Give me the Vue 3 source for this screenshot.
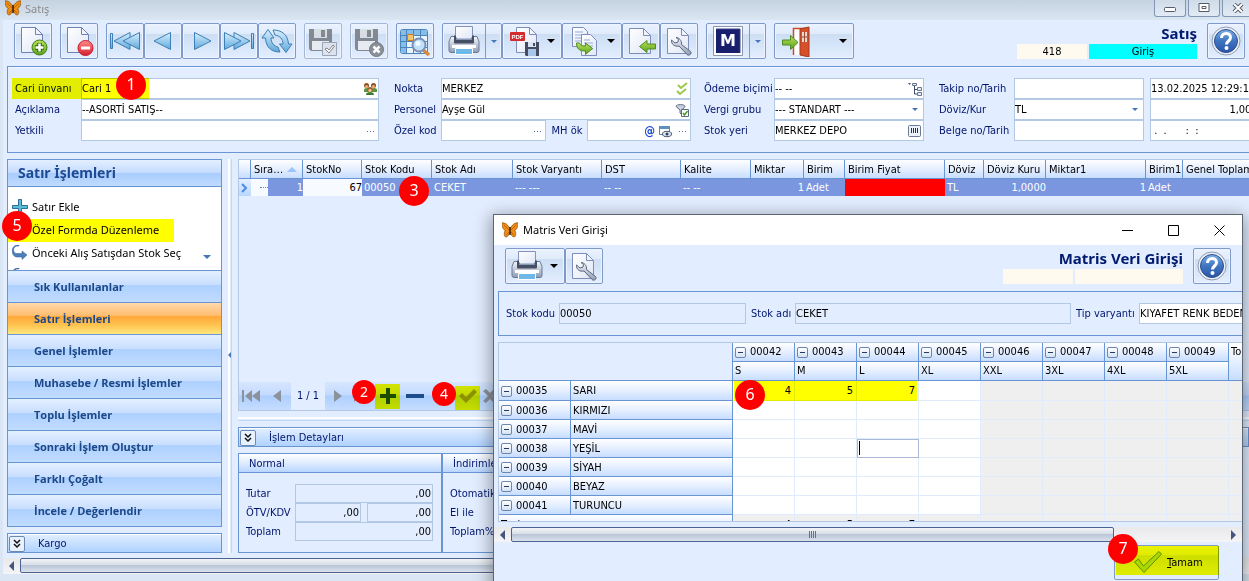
<script setup>
import { ref } from 'vue'

const toolbar = [
  [{ i: 'add', t: 'Yeni' }],
  [{ i: 'del', t: 'Sil' }],
  [{ i: 'first', t: 'İlk' }, { i: 'prev', t: 'Önceki' }, { i: 'next', t: 'Sonraki' }, { i: 'last', t: 'Son' }, { i: 'refresh', t: 'Yenile' }],
  [{ i: 'save', t: 'Kaydet', off: true }],
  [{ i: 'cancel', t: 'Vazgeç', off: true }],
  [{ i: 'find', t: 'Ara' }],
  [
    { i: 'print', t: 'Yazdır', split: true },
    { i: 'pdf', t: 'PDF', drop: true, tag: 'PDF' },
    { i: 'copy', t: 'Kopyala', drop: true },
    { i: 'import', t: 'Aktar' },
    { i: 'tools', t: 'Ayarlar' }
  ],
  [{ i: 'm', t: 'M', split: true, tag: 'M' }],
  [{ i: 'exit', t: 'Çıkış', drop: true, wide: true }]
]

const groups = [
  {
    c: 'g1',
    rows: [
      [{ id: 'cari', l: 'Cari ünvanı', v: 'Cari 1', icons: ['people'], hot: true }],
      [{ id: 'acik', l: 'Açıklama', v: '--ASORTİ SATIŞ--' }],
      [{ id: 'yet', l: 'Yetkili', v: '', icons: ['dots'] }]
    ]
  },
  {
    c: 'g2',
    rows: [
      [{ id: 'nokta', l: 'Nokta', v: 'MERKEZ', icons: ['checks'] }],
      [{ id: 'pers', l: 'Personel', v: 'Ayşe Gül', icons: ['filter'] }],
      [
        { id: 'ozel', l: 'Özel kod', v: '', icons: ['dots'] },
        { id: 'mh', l: 'MH ök', v: '', icons: ['at', 'view', 'dots'], second: true }
      ]
    ]
  },
  {
    c: 'g3',
    rows: [
      [{ id: 'odeme', l: 'Ödeme biçimi', v: '-- --', icons: ['tree'] }],
      [{ id: 'vergi', l: 'Vergi grubu', v: '--- STANDART ---', select: true }],
      [{ id: 'yer', l: 'Stok yeri', v: 'MERKEZ DEPO', icons: ['barcode'] }]
    ]
  },
  {
    c: 'g4',
    rows: [
      [{ id: 'takip', l: 'Takip no/Tarih', v: '' }],
      [{ id: 'doviz', l: 'Döviz/Kur', v: 'TL', select: true }],
      [{ id: 'belge', l: 'Belge no/Tarih', v: '' }]
    ]
  },
  {
    c: 'g5',
    rows: [
      [{ id: 'tarih', a: 'Takip tarihi', v: '13.02.2025 12:29:14' }],
      [{ id: 'kur', a: 'Kur', v: '1,0000', right: true }],
      [{ id: 'btarih', a: 'Belge tarihi', v: ' .  .      :  :' }]
    ]
  }
]

const nav = ['Sık Kullanılanlar', 'Satır İşlemleri', 'Genel İşlemler', 'Muhasebe / Resmi İşlemler', 'Toplu İşlemler', 'Sonraki İşlem Oluştur', 'Farklı Çoğalt', 'İncele / Değerlendir']
const active = ref(1)

const cols = [
  { h: 'Sıra…', w: 52, v: '1', r: true, sort: true },
  { h: 'StokNo', w: 59, v: '67', r: true, k: 'plain' },
  { h: 'Stok Kodu', w: 70, v: '00050', badge: 3 },
  { h: 'Stok Adı', w: 81, v: 'CEKET' },
  { h: 'Stok Varyantı', w: 89, v: '--- ---' },
  { h: 'DST', w: 79, v: '-- --' },
  { h: 'Kalite', w: 70, v: '-- --' },
  { h: 'Miktar', w: 53, v: '1', r: true },
  { h: 'Birim', w: 41, v: 'Adet' },
  { h: 'Birim Fiyat', w: 100, v: '', k: 'red' },
  { h: 'Döviz', w: 39, v: 'TL' },
  { h: 'Döviz Kuru', w: 62, v: '1,0000', r: true },
  { h: 'Miktar1', w: 100, v: '1', r: true },
  { h: 'Birim1', w: 37, v: 'Adet' },
  { h: 'Genel Toplam', w: 90, v: '' }
]

const sizes = [['00042', 'S'], ['00043', 'M'], ['00044', 'L'], ['00045', 'XL'], ['00046', 'XXL'], ['00047', '3XL'], ['00048', '4XL'], ['00049', '5XL']]
const colors = [['00035', 'SARI'], ['00036', 'KIRMIZI'], ['00037', 'MAVİ'], ['00038', 'YEŞİL'], ['00039', 'SİYAH'], ['00040', 'BEYAZ'], ['00041', 'TURUNCU']]
const amounts = ['4', '5', '7']
</script>

<template>
  <div class="app">
    <svg class="defs" aria-hidden="true">
      <defs>
        <linearGradient id="blue" x1="0" y1="0" x2="0" y2="1"><stop offset="0" stop-color="#d8efff" /><stop offset="1" stop-color="#5fa8dc" /></linearGradient>
        <linearGradient id="page" x1="0" y1="0" x2="1" y2="1"><stop offset="0" stop-color="#fff" /><stop offset="1" stop-color="#dfe6f5" /></linearGradient>
        <linearGradient id="green" x1="0" y1="0" x2="0" y2="1"><stop offset="0" stop-color="#b9e05a" /><stop offset="1" stop-color="#5aa21c" /></linearGradient>
        <linearGradient id="rose" x1="0" y1="0" x2="0" y2="1"><stop offset="0" stop-color="#ff8a8a" /><stop offset="1" stop-color="#d3202c" /></linearGradient>
        <linearGradient id="steel" x1="0" y1="0" x2="0" y2="1"><stop offset="0" stop-color="#f4f6fa" /><stop offset="1" stop-color="#8e9bb4" /></linearGradient>
        <linearGradient id="ball" x1="0" y1="0" x2="0" y2="1"><stop offset="0" stop-color="#7fb0e6" /><stop offset=".5" stop-color="#3f74c0" /><stop offset="1" stop-color="#2a55a8" /></linearGradient>
      </defs>
      <symbol id="i-add" viewBox="0 0 32 32"><path d="M4.500 2.500h14l7 7v18h-21z" fill="url(#page)" stroke="#6f82b8" /><path d="M18.500 2.500v7h7z" fill="#eef3fc" stroke="#6f82b8" /><circle cx="22.500" cy="22.500" r="7.500" fill="url(#green)" stroke="#3f7d16" /><path d="M22.500 18v9M18 22.500h9" stroke="#2f6b10" stroke-width="4.500" /><path d="M22.500 18.500v8M18.500 22.500h8" stroke="#fff" stroke-width="2.500" /></symbol>
      <symbol id="i-del" viewBox="0 0 32 32"><path d="M4.500 2.500h14l7 7v18h-21z" fill="url(#page)" stroke="#6f82b8" /><path d="M18.500 2.500v7h7z" fill="#eef3fc" stroke="#6f82b8" /><circle cx="22.500" cy="23" r="7.500" fill="url(#rose)" stroke="#c41c28" /><path d="M18 23h9" stroke="#fff" stroke-width="3" /></symbol>
      <symbol id="i-first" viewBox="0 0 32 32"><g fill="url(#blue)" stroke="#3d7fb4"><path d="M1.500 8.500h2v15h-2z" /><path d="M21 7.500 5 16l16 8.500v-6L16 16l5-2.500z" /><path d="M30.500 7.500 14 16l16.500 8.500z" /></g></symbol>
      <symbol id="i-prev" viewBox="0 0 32 32"><path d="M23.500 7.500 7 16l16.500 8.500z" fill="url(#blue)" stroke="#3d7fb4" /></symbol>
      <symbol id="i-next" viewBox="0 0 32 32"><path d="M9.500 7.500 26 16 9.500 24.500z" fill="url(#blue)" stroke="#3d7fb4" /></symbol>
      <symbol id="i-last" viewBox="0 0 32 32"><g fill="url(#blue)" stroke="#3d7fb4"><path d="M28.500 8.500h2v15h-2z" /><path d="M11 7.500 27 16l-16 8.500v-6L16 16l-5-2.500z" /><path d="M1.500 7.500 18 16 1.500 24.500z" /></g></symbol>
      <symbol id="i-refresh" viewBox="0 0 32 32"><g fill="url(#blue)" stroke="#3d7fb4"><path d="M7 4.500 13 13H10c0 5 3 8 7 9l2 5C10 27 5 22 4.500 13H1z" /><path d="M25 27.500 18.500 19H22c0-5-3-8-8-9l-2-5c9 0 15 5 15.500 14H31z" /></g></symbol>
      <symbol id="i-save" viewBox="0 0 32 32"><path d="M2 4h23v22H4l-2-2z" fill="#747980" /><path d="M7 4h13v9H7z" fill="#d8dce2" /><path d="M14 5h4v7h-4z" fill="#747980" /><path d="M5 16h17v9H5z" fill="#e9ecf0" /><path d="M15.500 17.500h14v13h-14z" fill="#dce2ec" stroke="#8e98a8" /><path d="m18 24 2-1 2 2 4-5 1.500 1-5.500 7z" fill="#fff" stroke="#777" /></symbol>
      <symbol id="i-cancel" viewBox="0 0 32 32"><path d="M2 4h23v22H4l-2-2z" fill="#747980" /><path d="M7 4h13v9H7z" fill="#d8dce2" /><path d="M14 5h4v7h-4z" fill="#747980" /><path d="M5 16h17v9H5z" fill="#e9ecf0" /><circle cx="23.500" cy="24.500" r="7" fill="#7d8288" stroke="#5f646a" /><path d="m20.500 21.500 6 6m0-6-6 6" stroke="#fff" stroke-width="2.500" /></symbol>
      <symbol id="i-find" viewBox="0 0 32 32"><rect x="1.500" y="4.500" width="27" height="24" rx="2" fill="#eaf4fd" stroke="#4b84ba" /><path d="M2 5h26v5H2zM2 10h5v18H2z" fill="#86bde8" /><path d="M7.500 5v23M14.500 5v23M21.500 5v23M2 10.500h26M2 16.500h26M2 22.500h26" stroke="#4b84ba" /><path d="M8.500 9.500h6v6h-6z" fill="#f6c26c" stroke="#cc7b20" /><path d="m23 24 7 6" stroke="#d28b38" stroke-width="3.500" /><circle cx="20" cy="20" r="6.500" fill="#bfe0f8" stroke="#7a8fb8" stroke-width="2" /><circle cx="19" cy="18.500" r="2.500" fill="#f2faff" /></symbol>
      <symbol id="i-print" viewBox="0 0 32 32"><path d="M7.500 1.500h17V14h-17z" fill="url(#page)" stroke="#8292ba" /><path d="M3 11.500h4.500L9 15h14l1.500-3.500H29l2 5v9q0 2-2 2H3q-2 0-2-2v-9z" fill="url(#steel)" stroke="#6a7894" /><path d="M6 10.500h2V15h16v-4.500h2v7q0 1-1 1H7q-1 0-1-1z" fill="#454e63" /><path d="M4 20h24v3H4z" fill="#fff" /><path d="M7.500 23.500h17v6h-17z" fill="#6fb8ea" stroke="#fff" /></symbol>
      <symbol id="i-pdf" viewBox="0 0 32 32"><path d="M8.500 2.500h13l7 7v18h-20z" fill="url(#page)" stroke="#7f8dbb" /><path d="M21.500 2.500v7h7z" fill="#eef3fc" stroke="#7f8dbb" /><rect x="2" y="7" width="15" height="9" rx="1" fill="#d42c2c" /><path d="M17 17h14v14H18l-1-1z" fill="#434c60" /><path d="M20 17h8v5h-8z" fill="#dbe6f5" /><path d="M25 18h2v3h-2z" fill="#434c60" /><path d="M20 24h8v7h-8z" fill="#a9c5e8" /></symbol>
      <symbol id="i-copy" viewBox="0 0 32 32"><path d="M4.500 2.500h11l4 4v15h-15z" fill="url(#page)" stroke="#7f8dbb" /><path d="M7 7h8M7 10h9M7 13h9M7 16h9" stroke="#93abd6" /><path d="M13.500 9.500h9l6 6v15h-15z" fill="url(#page)" stroke="#7f8dbb" /><path d="M16 15h6M16 18h9M16 21h9M16 24h9" stroke="#93abd6" /><path d="M8.500 18c0 6 3 8 9 8v3.500l7-6-7-5.500v3c-4 0-5-1-6-3z" fill="url(#green)" stroke="#4e8c22" /></symbol>
      <symbol id="i-import" viewBox="0 0 32 32"><path d="M4.500 3.500h14l7 7v18h-21z" fill="url(#page)" stroke="#7f8dbb" /><path d="M18.500 3.500v7h7z" fill="#eef3fc" stroke="#7f8dbb" /><path d="M14.500 21.500 22 15.500v3.500h8.500v5H22v3.500z" fill="url(#green)" stroke="#4e8c22" /></symbol>
      <symbol id="i-tools" viewBox="0 0 32 32"><path d="M4.500 3.500h14l7 7v18h-21z" fill="url(#page)" stroke="#7f8dbb" /><path d="M18.500 3.500v7h7z" fill="#eef3fc" stroke="#7f8dbb" /><path d="M13 12.500c3 0 6 3 5.500 7l9 7c2 2-1.500 5-3.500 3l-8-8.500c-4 1-8-1.500-7.500-6l3.500 3 3-1 .500-2.500z" fill="url(#steel)" stroke="#59667e" /></symbol>
      <symbol id="i-m" viewBox="0 0 32 32"><path d="M1.500 1.500h29v29h-29z" fill="#fff" stroke="#8b95ac" /><path d="M4 4h24v24H4z" fill="#18206d" /><path d="M4 4h24v24" fill="none" stroke="#3a4390" /></symbol>
      <symbol id="i-exit" viewBox="0 0 32 32"><path d="M13.500 30V3.500h12V30" fill="#fff" stroke="#cf4a26" stroke-width="1.500" /><path d="m20 4 9-2v30l-9-2z" fill="#d6502a" stroke="#a43a1c" /><path d="M22 7h5v10h-5z" fill="#ead8cc" /><path d="M24.500 7v10M22 12h5" stroke="#9a4a30" /><path d="M2.500 15h8v-4.500L18 17.500l-7.500 7V20h-8z" fill="url(#green)" stroke="#4e8c22" /></symbol>
      <symbol id="i-help" viewBox="0 0 32 32"><circle cx="16" cy="16" r="14" fill="#eef2f8" stroke="#8d99b4" /><circle cx="16" cy="16" r="11.500" fill="url(#ball)" stroke="#2e4f8e" /><path d="M11.500 13c0-6 9-6 9-.500 0 3.500-4 3.500-4 7" fill="none" stroke="#fff" stroke-width="3" /><circle cx="16.500" cy="23" r="2" fill="#fff" /></symbol>
      <symbol id="i-bfly" viewBox="0 0 16 16"><path d="M7.500 6C5 1 1 .500 0 1c0 3 1 7 3.500 7.500C1.500 10 2 15 4 15c2 0 3-3 4-5 1 2 2 5 4 5s2.500-5 .500-6.500C15 8 16 4 16 1c-1-.500-5 0-7.500 5z" fill="#ee8d12" stroke="#8c4a08" stroke-width=".7" /><path d="M8 5v8" stroke="#3a1d05" stroke-width="1.500" /><path d="M7 8 2 3M9 8l5-5M7 10l-3 3m5-3 3 3" stroke="#a85a08" stroke-width=".7" /></symbol>
      <symbol id="i-people" viewBox="0 0 14 14"><path d="M1 8q0-2 3-2t3 2v2H1zM8 8q0-2 3-2t3 2v2H8z" fill="#5e9140" /><circle cx="3.500" cy="3.500" r="2.500" fill="#8c4e1e" /><circle cx="10.500" cy="3.500" r="2.500" fill="#8c4e1e" /><circle cx="3.500" cy="4.500" r="1.500" fill="#eeb27c" /><circle cx="10.500" cy="4.500" r="1.500" fill="#eeb27c" /><path d="M3 13q0-3 4-3t4 3z" fill="#3e7d2e" /><circle cx="7" cy="7.500" r="2.500" fill="#9b5a24" /><circle cx="7" cy="8.500" r="1.700" fill="#f3bd8a" /></symbol>
      <symbol id="i-dots" viewBox="0 0 14 14"><path d="M4 7.500h1M7 7.500h1M10 7.500h1" stroke="#3f6db0" /></symbol>
      <symbol id="i-checks" viewBox="0 0 14 14"><path d="m3 3 3 3 6-5M2 9l3 3 6-5" fill="none" stroke="#9cc84a" stroke-width="2" /></symbol>
      <symbol id="i-filter" viewBox="0 0 14 14"><path d="M1 3.500C1 1 10 1 10 3.500L7 7v5L5 10V7z" fill="#c9d1dd" stroke="#5d6b80" /><path d="M6.500 6.500h7v7h-7z" fill="#fff" stroke="#5d6b80" /><path d="m8 10 1.500 2 3-4" fill="none" stroke="#4a9b20" stroke-width="1.500" /></symbol>
      <symbol id="i-view" viewBox="0 0 14 14"><path d="M1.500 2.500h10v8h-10z" fill="#fff" stroke="#5f7fa8" /><path d="M1 2h11v3H1z" fill="#5f8ec0" /><ellipse cx="9" cy="10" rx="4.500" ry="2.700" fill="#dce6f3" stroke="#4a5a74" /><circle cx="9" cy="10" r="1.500" fill="#34435c" /></symbol>
      <symbol id="i-tree" viewBox="0 0 14 14"><path d="M0 1h3l-1.500 2z" fill="#45597a" /><path d="M6.500 3v9H10M6.500 7.500H10" fill="none" stroke="#3a4c66" /><path d="M4.500 1.500h4v2h-4zM9.500 5.500h4v3h-4zM9.500 10.500h4v3h-4z" fill="#e8eef6" stroke="#66768f" /></symbol>
      <symbol id="i-barcode" viewBox="0 0 14 14"><rect x=".5" y="1.500" width="12" height="11" rx="1" fill="#eef3fa" stroke="#6a7b98" /><path d="M3.500 4v5M5.500 4v5M7.500 4v5M9.500 4v5" stroke="#26324c" /></symbol>
      <symbol id="i-double" viewBox="0 0 14 14"><path d="m4 3 3 3 3-3M4 7l3 3 3-3" fill="none" stroke="#111" stroke-width="1.500" /></symbol>
      <symbol id="i-link" viewBox="0 0 16 16"><path d="M7 1C1 0 0 7 4 8.500h6V6l5 4-5 4.500V12H4C-2 10-1-1 7 0z" fill="#4e7fb9" stroke="#335f96" stroke-width=".5" /></symbol>
      <symbol id="i-plus" viewBox="0 0 16 16"><path d="M6.500.5h3v6h6v3h-6v6h-3v-6h-6v-3h6z" fill="#58bdd6" stroke="#2f6d94" /></symbol>
    </svg>

    <header class="caption">
      <svg class="s16"><use href="#i-bfly" /></svg>
      <span>Satış</span>
      <div class="winbtns">
        <button aria-label="Küçült"><svg viewBox="0 0 12 10"><rect x=".5" y="4.500" width="11" height="4" rx="1" fill="#fff" stroke="#545d69" /></svg></button>
        <button aria-label="Büyüt"><svg viewBox="0 0 12 10"><path d="M1 .5h10v8H1z" fill="#fff" stroke="#545d69" /><path d="M4 3.500h4v2H4z" fill="#fff" stroke="#545d69" /></svg></button>
        <button aria-label="Kapat"><svg viewBox="0 0 12 10"><path d="m2 1 8 8m0-8L2 9" stroke="#545d69" stroke-width="4" /><path d="m2 1 8 8m0-8L2 9" stroke="#fff" stroke-width="2" /></svg></button>
      </div>
    </header>

    <div class="body">
      <div class="toolbar">
        <div v-for="(g, n) in toolbar" :key="n" class="tgroup">
          <button v-for="b in g" :key="b.i" class="tb" :class="{ off: b.off, split: b.split, drop: b.drop, wide: b.wide }" :aria-label="b.t">
            <span class="face"><svg class="s32"><use :href="'#i-' + b.i" /></svg><b v-if="b.tag" :class="'tag-' + b.i">{{ b.tag }}</b></span>
            <span v-if="b.split || b.drop" class="arr"><i class="tri"></i></span>
          </button>
        </div>
        <div class="ident">
          <h1>Satış</h1>
          <div class="chips"><span class="chip">418</span><span class="chip long cyan">Giriş</span></div>
        </div>
        <button class="tb" aria-label="Yardım"><span class="face"><svg class="s32"><use href="#i-help" /></svg></span></button>
      </div>

      <section class="form">
        <div v-for="g in groups" :key="g.c" class="fgroup" :class="g.c">
          <div v-for="(r, n) in g.rows" :key="n" class="frow">
            <template v-for="f in r" :key="f.id">
              <label v-if="f.l" :for="f.id" :class="{ second: f.second }">{{ f.l }}</label>
              <div class="field">
                <select v-if="f.select" :id="f.id"><option>{{ f.v }}</option></select>
                <input v-else :id="f.id" :value="f.v" :class="{ right: f.right }" :aria-label="f.a" />
                <i v-if="f.select" class="tri blue"></i>
                <template v-for="ic in f.icons" :key="ic">
                  <b v-if="ic === 'at'" class="at">@</b>
                  <svg v-else class="s14"><use :href="'#i-' + ic" /></svg>
                </template>
              </div>
              <template v-if="f.hot"><span class="mark m1"></span><span class="badge b1">1</span></template>
            </template>
          </div>
        </div>
      </section>

      <div class="work">
        <aside>
          <div class="side">
            <h2>Satır İşlemleri</h2>
            <div class="list">
              <a href="#"><svg class="s16"><use href="#i-plus" /></svg>Satır Ekle</a>
              <a href="#" class="hotrow"><svg class="s16"></svg>Özel Formda Düzenleme<span class="badge b5">5</span></a>
              <a href="#"><svg class="s16"><use href="#i-link" /></svg>Önceki Alış Satışdan Stok Seç</a>
              <a href="#"><svg class="s16"><use href="#i-link" /></svg>Önceki İşlemler</a>
              <i class="tri blue more"></i>
            </div>
            <button v-for="(n, k) in nav" :key="n" class="nav" :class="{ on: k === active }" @click="active = k">{{ n }}</button>
          </div>
          <div class="bar"><button aria-label="Aç"><svg class="s14"><use href="#i-double" /></svg></button>Kargo</div>
        </aside>
        <div class="splitter"><i></i></div>
        <main>
          <div class="gridbox">
            <table class="lines">
              <colgroup><col class="ind" /><col v-for="c in cols" :key="c.h" :style="{ width: c.w + 'px' }" /></colgroup>
              <thead><tr><th></th><th v-for="c in cols" :key="c.h">{{ c.h }}<i v-if="c.sort" class="sort"></i></th></tr></thead>
              <tbody>
                <tr>
                  <td class="cur"><svg viewBox="0 0 8 10"><path d="m1 1 4 4-4 4" fill="none" stroke="#4b8be0" stroke-width="2" /></svg></td>
                  <td v-for="c in cols" :key="c.h" :class="[c.k, { r: c.r, sel: c.sort }]">{{ c.v }}<span v-if="c.badge" class="badge b3">{{ c.badge }}</span></td>
                </tr>
              </tbody>
            </table>
            <div class="pager">
              <button aria-label="İlk kayıt"><svg viewBox="0 0 22 16"><path d="M1 2h2v12H1zM11 2v12L4 8zM19 2v12l-8-6z" /></svg></button>
              <button aria-label="Önceki kayıt"><svg viewBox="0 0 22 16"><path d="M14 2v12L6 8z" /></svg></button>
              <span class="count">1 / 1</span>
              <button aria-label="Sonraki kayıt"><svg viewBox="0 0 22 16"><path d="M7 2v12l8-6z" /></svg></button>
              <button class="hidden-last" aria-label="Son kayıt"><svg viewBox="0 0 22 16"><path d="M2 2v12l7-6z" /></svg><span class="badge small b2">2</span></button>
              <button class="plus" aria-label="Ekle"><svg viewBox="0 0 22 16"><path d="M9 0h4v6h6v4h-6v6H9v-6H3V6h6z" fill="#1d4c8a" /></svg><span class="mark m2"></span></button>
              <button class="minus" aria-label="Sil"><svg viewBox="0 0 22 16"><path d="M2 6h18v4H2z" fill="#1d4c8a" /></svg></button>
              <button class="ok" aria-label="Onayla"><svg viewBox="0 0 22 16"><path d="m2 8 3-3 4 4 8-8 3 3L9 15z" /></svg><span class="mark m4"></span><span class="badge small b4">4</span></button>
              <button aria-label="İptal"><svg viewBox="0 0 22 16"><path d="m0 3 3-2 4 4 4-4 3 2-5 5 5 5-3 2-4-4-4 4-3-2 5-5z" /></svg></button>
            </div>
          </div>
          <div class="hsplit"></div>
          <div class="bar"><button aria-label="Aç"><svg class="s14"><use href="#i-double" /></svg></button>İşlem Detayları</div>
          <div class="totals">
            <section class="tot">
              <h3>Normal</h3>
              <div class="trow"><label for="tutar">Tutar</label><input id="tutar" value=",00" /></div>
              <div class="trow"><label for="otv">ÖTV/KDV</label><input id="otv" value=",00" /><input aria-label="KDV" value=",00" /></div>
              <div class="trow"><label for="toplam">Toplam</label><input id="toplam" value=",00" /></div>
            </section>
            <section class="tot">
              <h3>İndirimler</h3>
              <div class="trow"><label for="oto">Otomatik</label><input id="oto" value=",00" /></div>
              <div class="trow"><label for="el">El ile</label><input id="el" value=",00" /></div>
              <div class="trow"><label for="ty">Toplam%</label><input id="ty" value=",00" /></div>
            </section>
          </div>
        </main>
      </div>
      <div class="scroll"><button aria-label="Sola"><i class="tl"></i></button><div class="thumb"></div><button aria-label="Sağa"><i class="tr"></i></button></div>
    </div>

    <div class="dialog" role="dialog" aria-label="Matris Veri Girişi">
      <div class="dcap">
        <svg class="s16"><use href="#i-bfly" /></svg><span>Matris Veri Girişi</span>
        <div class="dbtns">
          <button aria-label="Küçült"><svg viewBox="0 0 11 11"><path d="M0 5.500h11" stroke="#000" /></svg></button>
          <button aria-label="Büyüt"><svg viewBox="0 0 11 11"><path d="M.5.5h10v10H.5z" fill="none" stroke="#000" /></svg></button>
          <button aria-label="Kapat"><svg viewBox="0 0 11 11"><path d="m.5.5 10 10m0-10-10 10" stroke="#000" /></svg></button>
        </div>
      </div>
      <div class="toolbar dtool">
        <div class="tgroup">
          <button class="tb drop" aria-label="Yazdır"><span class="face"><svg class="s32"><use href="#i-print" /></svg></span><span class="arr"><i class="tri"></i></span></button>
          <button class="tb" aria-label="Ayarlar"><span class="face"><svg class="s32"><use href="#i-tools" /></svg></span></button>
        </div>
        <div class="ident">
          <h1>Matris Veri Girişi</h1>
          <div class="chips"><span class="chip"></span><span class="chip long"></span></div>
        </div>
        <button class="tb" aria-label="Yardım"><span class="face"><svg class="s32"><use href="#i-help" /></svg></span></button>
      </div>
      <div class="dform">
        <label for="dk">Stok kodu</label><div class="field ro w1"><input id="dk" value="00050" /></div>
        <label for="da">Stok adı</label><div class="field ro w2"><input id="da" value="CEKET" /></div>
        <label for="dt">Tip varyantı</label><div class="field w3"><input id="dt" value="KIYAFET RENK BEDEN" /></div>
      </div>
      <div class="matbox">
        <table class="matrix">
          <colgroup><col class="c1" /><col class="c2" /><col v-for="s in sizes" :key="s[0]" class="c3" /><col class="c3" /></colgroup>
          <thead>
            <tr>
              <th colspan="2" rowspan="2" class="corner"></th>
              <th v-for="s in sizes" :key="s[0]"><button class="pm" aria-label="Daralt"></button>{{ s[0] }}</th>
              <th rowspan="2" class="topl">Toplam</th>
            </tr>
            <tr><th v-for="s in sizes" :key="s[1]">{{ s[1] }}</th></tr>
          </thead>
          <tbody>
            <tr v-for="(c, y) in colors" :key="c[0]" :class="{ lead: y === 0 }">
              <th><button class="pm" aria-label="Daralt"></button>{{ c[0] }}</th>
              <th>{{ c[1] }}</th>
              <td v-for="x in 9" :key="x" :class="{ grey: x > 4, edit: y === 3 && x === 3 }">
                <template v-if="y === 0 && x < 4">{{ amounts[x - 1] }}</template>
                <i v-if="y === 3 && x === 3" class="caret"></i>
                <template v-if="y === 0 && x === 1"><span class="mark m6"></span><span class="badge b6">6</span></template>
              </td>
            </tr>
            <tr>
              <th colspan="2">Toplam</th>
              <td v-for="x in 9" :key="x" class="grey">{{ amounts[x - 1] }}</td>
            </tr>
          </tbody>
        </table>
      </div>
      <div class="scroll dscroll"><button aria-label="Sola"><i class="tl"></i></button><div class="thumb"><i></i></div><div class="rest"></div><button aria-label="Sağa"><i class="tr"></i></button></div>
      <div class="actions">
        <button class="done"><svg viewBox="0 0 30 26"><path d="m1.500 12 4-3 5 7L26 1.500 28.500 4 11 22.500z" fill="#a8d860" stroke="#5f8f5f" /></svg><span><u>T</u>amam</span><span class="mark m7"></span><span class="badge b7">7</span></button>
      </div>
    </div>
  </div>
</template>

<style>
html, body { margin: 0; background: #dae6f3; overflow: hidden; }
</style>

<style scoped>
.app { position: relative; min-height: 100vh; overflow: hidden; background: #dae6f3; font: 11px/14px "DejaVu Sans Condensed", "Noto Sans", sans-serif; color: #000; }
.app *, .app *::before { box-sizing: border-box; }
.defs { position: absolute; width: 0; height: 0; }
button, input, select { font: inherit; color: inherit; margin: 0; padding: 0; border: 0; background: none; }
svg { display: block; flex: none; }
h1, h2, h3 { margin: 0; }
.s16 { width: 16px; height: 16px; }
.s32 { width: 32px; height: 32px; }
.s14 { width: 14px; height: 14px; }

.caption { height: 20px; display: flex; align-items: flex-start; gap: 4px; padding-left: 5px; background: linear-gradient(#c5d2df, #dae6f2); color: #8b8b8b; font: 11px/18px "Noto Sans", sans-serif; }
.winbtns { margin-left: auto; display: flex; gap: 2px; margin-right: -5px; }
.winbtns button { width: 32px; height: 17px; border: 1px solid #8195b5; border-top: 0; border-radius: 0 0 3px 3px; background: linear-gradient(#cfdbe8, #e2ebf5); display: flex; align-items: center; justify-content: center; }
.winbtns svg { width: 12px; height: 10px; }

.body { margin-left: 3px; background: #e2edff; }
.toolbar { display: flex; align-items: flex-start; gap: 8px; padding: 3px 4px 0 11px; height: 46px; }
.tgroup { display: flex; flex: none; }
.tb { display: flex; width: 38px; height: 36px; flex: none; border: 1px solid #7f9ac8; border-radius: 2px; background: linear-gradient(#eaf2fe 0, #e0ebfb 28%, #cddef3 29%, #d5e4f8 60%, #e3eeff); box-shadow: inset 0 0 0 1px #edf4ff; }
.face { position: relative; width: 36px; height: 34px; display: flex; align-items: center; justify-content: center; flex: none; }
.tag-pdf { position: absolute; left: 7px; top: 9px; width: 15px; text-align: center; font: bold 6px/8px "Liberation Sans", sans-serif; color: #fff; }
.tag-m { position: absolute; left: 0; right: 0; top: 7px; text-align: center; font: bold 16px/20px "DejaVu Sans", sans-serif; color: #fff; }
.arr { flex: 1; align-self: stretch; display: flex; align-items: center; justify-content: center; }
.tb.split, .tb.drop { width: 60px; }
.tb.split .face { width: 42px; }
.tb.split .arr { border-left: 1px solid #7f9ac8; }
.tb.drop .face { width: 42px; }
.tb.drop .arr { justify-content: flex-start; padding-left: 2px; }
.tb.wide { width: 80px; }
.tb.wide .arr { justify-content: flex-end; padding-right: 6px; }
.tb.off { border-color: #a6b8d6; }
.tb.off svg { opacity: .85; }
.tri { border: 4px solid transparent; border-top-color: #000; border-bottom: 0; }
.tb.split .tri, .tri.blue { border-width: 3px; border-bottom: 0; border-top-color: #4576b8; }
.ident { margin-left: auto; }
.ident h1 { font: bold 15px/20px "Noto Sans", sans-serif; color: #001a70; text-align: right; margin-bottom: 1px; }
.chips { display: flex; gap: 2px; }
.chip { width: 70px; height: 15px; line-height: 15px; text-align: center; background: #fffaf0; }
.chip.long { width: 108px; }
.chip.cyan { background: #0ff; }
.toolbar > .tb { margin-left: 2px; }

.form { margin-left: 4px; height: 87px; border: 1px solid #6a95d3; border-right: 0; box-shadow: inset 0 1px #f2f7ff; display: flex; gap: 15px; padding: 11px 0 0 7px; overflow: hidden; }
.fgroup { flex: none; }
.frow { display: flex; position: relative; height: 21px; align-items: center; color: #00156e; }
.frow label { flex: none; white-space: nowrap; }
.g1 { width: 364px; } .g1 label { width: 66px; }
.g2 { width: 297px; } .g2 label { width: 47px; }
.g2 label.second { width: 41px; padding-left: 6px; }
.g3 { width: 220px; margin-left: -2px; } .g3 label { width: 70px; }
.g4 { width: 205px; } .g4 label { width: 75px; }
.g5 { width: 116px; margin-left: -9px; }
.field { flex: 1; min-width: 0; height: 21px; border: 1px solid #b3c8e4; background: #fff; display: flex; align-items: center; padding-right: 1px; gap: 3px; }
.field input, .field select { flex: 1; min-width: 0; width: 0; height: 18px; padding: 0; appearance: none; color: #000; outline: 0; }
.field input.right { text-align: right; }
.field .tri { margin-right: 4px; }
.g5 input { white-space: pre; }
.at { color: #1746dc; font-size: 12px; }
.ro { background: none; }

.work { display: flex; margin: 6px 0 0 4px; }
aside { width: 215px; flex: none; }
.side { border: 1px solid #6a95d3; background: #fff; }
.side h2 { height: 27px; padding-left: 10px; font: bold 14px/26px "Noto Sans", sans-serif; color: #1c4b94; background: linear-gradient(#e3efff, #c4dcff 50%, #a9cdfd 52%, #c0dbff); border-bottom: 1px solid #6a95d3; }
.list { position: relative; height: 83px; padding-top: 9px; clip-path: inset(0 0 0 -10px); }
.list a { display: flex; align-items: center; gap: 4px; height: 23px; padding: 0 0 2px 4px; color: #000; text-decoration: none; font: 11px/16px "Noto Sans", sans-serif; position: relative; }
.hotrow { width: 166px; background: #ff0; }
.more { position: absolute; right: 10px; bottom: 11px; }
.list .more { border-width: 4px 4px 0; }
.nav { display: block; width: 100%; height: 32px; padding-left: 26px; text-align: left; color: #1c4887; font: bold 11px/30px "Open Sans", sans-serif; border-top: 1px solid #6a95d3; background: linear-gradient(#e3efff 0, #c9dfff 44%, #aed1ff 46%, #c1dbff); }
.nav.on { background: linear-gradient(#ffd9aa 0, #ffbe70 40%, #ffa83c 43%, #ffc24e 70%, #fee67b); }
.bar { height: 20px; margin-top: 6px; border: 1px solid #6a95d3; background: linear-gradient(#e3efff, #afd2ff); box-shadow: inset 0 1px #fff; display: flex; align-items: center; gap: 13px; padding: 1px 0 0 1px; color: #00156e; }
.bar button { width: 16px; height: 16px; border: 1px solid #6c89b6; border-radius: 2px; background: #e8f1fe; display: flex; align-items: center; justify-content: center; }
.splitter { width: 16px; flex: none; position: relative; }
.splitter::before { content: ""; position: absolute; left: 6px; top: 0; bottom: 0; width: 4px; border-left: 2px solid #fff; border-right: 1px solid #bed8fb; }
.splitter i { position: absolute; left: 6px; top: 193px; border: 3px solid transparent; border-right-color: #4576b8; border-left: 0; }
main { flex: 1; min-width: 0; }
.gridbox { border: 1px solid #b3c8e4; border-right: 0; height: 252px; display: flex; flex-direction: column; overflow: hidden; }
table { table-layout: fixed; border-collapse: separate; border-spacing: 0; width: 0; }
.lines .ind { width: 12px; }
.lines th { height: 19px; padding: 2px 0 0 3px; text-align: left; font-weight: normal; white-space: nowrap; overflow: hidden; border-right: 1px solid #6a95d3; border-bottom: 1px solid #6a95d3; background: linear-gradient(#fff, #e5efff 50%, #c7ddff); position: relative; }
.lines td { height: 17px; padding: 1px 0 0 2px; background: #7a96df; color: #fff; white-space: nowrap; position: relative; line-height: 14px; }
.lines .r { text-align: right; }
.lines .plain { background: #f7fbff; color: #000; }
.lines .red { background: #f00; }
.lines .cur { background: linear-gradient(#e3efff, #b9d6ff); }
.lines .cur svg { width: 8px; height: 10px; }
.lines .sel { background: linear-gradient(90deg, #f7fbff 17px, #7a96df 17px); }
.lines .sel::before { content: ""; position: absolute; left: 9px; top: 8px; width: 8px; border-top: 1px dotted #5b88c8; }
.sort { position: absolute; right: 5px; top: 7px; border: 5px solid transparent; border-bottom-color: #9cc4fb; border-top: 0; }
.pager { margin-top: auto; height: 28px; display: flex; align-items: center; background: linear-gradient(#d6e6fe, #c4daff 45%, #adcfff 50%, #c6ddfe); }
.pager button { position: relative; width: 26px; height: 28px; flex: none; display: flex; align-items: center; justify-content: center; }
.pager svg { width: 22px; height: 16px; fill: #8c929c; }
.count { width: 34px; height: 28px; line-height: 28px; text-align: center; background: #e2edff; color: #00156e; }
.pager .hidden-last { width: 24px; }
.pager .minus { width: 28px; }
.pager .ok { margin-left: 26px; }
.hsplit { height: 4px; margin: 6px 0 0; border-top: 2px solid #fff; border-bottom: 1px solid #bed8fb; }
.totals { display: flex; margin-top: 6px; height: 100px; }
.tot { width: 204px; flex: none; border: 1px solid #6a95d3; }
.tot h3 { height: 19px; padding-left: 10px; margin-bottom: 11px; font: 11px/19px "DejaVu Sans Condensed", "Noto Sans", sans-serif; color: #00156e; border-bottom: 1px solid #6a95d3; background: linear-gradient(#fff, #dfebff 50%, #b8d6ff); }
.trow { display: flex; height: 19px; gap: 6px; padding: 0 8px 0 7px; align-items: center; color: #00156e; }
.trow label { width: 43px; white-space: nowrap; }
.trow input { flex: 1; min-width: 0; width: 0; height: 19px; border: 1px solid #b3c8e4; text-align: right; padding-right: 1px; color: #000; }
.scroll { display: flex; height: 16px; margin-top: 5px; background: linear-gradient(#e9e9ec, #f4f4f6); }
.scroll button { width: 17px; display: flex; align-items: center; justify-content: center; flex: none; }
.tl, .tr { border: 5px solid transparent; }
.tl { border-right-color: #44557e; border-left: 0; }
.tr { border-left-color: #44557e; border-right: 0; }
.thumb { flex: 1; height: 15px; border: 1px solid #4c6290; border-radius: 2px; background: linear-gradient(#f3f4f6, #d8dfe8 45%, #b9c6d9 50%, #dce2ea); }

.dialog { position: absolute; left: 493px; right: 6px; top: 214px; padding-bottom: 8px; border: 1px solid #5d6774; background: #e2edff; box-shadow: 0 4px 16px 2px rgba(0, 0, 0, .38); }
.dcap { height: 30px; display: flex; align-items: center; gap: 5px; padding-left: 8px; background: #fff; font: 11px/16px "Noto Sans", sans-serif; }
.dbtns { margin-left: auto; display: flex; }
.dbtns button { width: 46px; height: 28px; display: flex; align-items: center; justify-content: center; }
.dbtns svg { width: 11px; height: 11px; }
.dtool { padding: 3px 11px 0; }
.dform { display: flex; align-items: center; height: 45px; margin-left: 4px; padding-left: 7px; border: 1px solid #6a95d3; border-right: 0; overflow: hidden; color: #00156e; white-space: nowrap; }
.dform label { flex: none; }
.w1 { flex: none; width: 187px; margin: 0 5px 0 0; }
.w2 { flex: 1; margin: 0 5px 0 0; }
.w3 { flex: none; width: 103px; padding: 0; border-right: 0; }
.dform label:nth-of-type(1) { width: 53px; }
.dform label:nth-of-type(2) { width: 44px; }
.dform label:nth-of-type(3) { width: 63px; }
.matbox { margin: 6px 0 0 4px; height: 180px; border: 1px solid #b3c8e4; border-right: 0; overflow: hidden; }
.matrix .c1 { width: 72px; } .matrix .c2 { width: 162px; } .matrix .c3 { width: 62px; }
.matrix th { height: 19px; padding: 0 0 0 2px; text-align: left; font-weight: normal; white-space: nowrap; line-height: 14px; border-right: 1px solid #6a95d3; border-bottom: 1px solid #6a95d3; background: linear-gradient(#fff, #e5efff 50%, #c7ddff); }
.matrix .corner { background: #e2edff; }
.matrix .topl { vertical-align: top; padding-top: 2px; }
.matrix td { height: 19px; padding: 1px 3px 0 0; text-align: right; position: relative; line-height: 14px; background: #fff; border-right: 1px solid #e0ebfb; border-bottom: 1px solid #e0ebfb; }
.matrix tbody th { padding-top: 1px; }
.matrix .lead th, .matrix .lead td { height: 20px; }
.matrix td.grey { background: #efefef; }
.matrix td.edit { border: 1px solid #a9b9d6; }
.caret { position: absolute; left: 1px; top: 1px; height: 14px; border-left: 1px solid #000; }
.pm { display: inline-block; vertical-align: middle; position: relative; width: 11px; height: 11px; margin-right: 4px; border: 1px solid #6c87ae; border-radius: 2px; background: linear-gradient(#fff, #d5e2f3); }
.pm::before { content: ""; position: absolute; left: 2px; right: 2px; top: 4px; border-top: 1px solid #223a66; }
.dscroll { height: 15px; }
.dscroll .thumb { position: relative; }
.dscroll .rest { width: 111px; flex: none; }
.thumb i { position: absolute; left: 50%; top: 3px; width: 8px; height: 7px; margin-left: -4px; background: repeating-linear-gradient(90deg, #63738f 0 1px, transparent 1px 2px); }
.actions { display: flex; justify-content: flex-end; padding: 3px 23px 0 0; }
.done { position: relative; width: 105px; height: 35px; border: 1px solid #7f9ac8; border-radius: 2px; display: flex; align-items: center; padding: 0 0 0 18px; gap: 4px; background: linear-gradient(#eaf2fe 0, #e0ebfb 28%, #cddef3 29%, #e3eeff); }
.done svg { width: 30px; height: 26px; }

.mark { position: absolute; background: #ff0; mix-blend-mode: multiply; pointer-events: none; }
.badge { position: absolute; z-index: 2; width: 30px; height: 30px; border-radius: 50%; background: #f00; color: #fff; text-align: center; font: 16px/29px "Noto Sans", sans-serif; }
.badge.small { width: 24px; height: 24px; font-size: 14px; line-height: 23px; }
.m1 { left: -3px; top: 0; width: 137px; height: 21px; }
.b1 { left: 101px; top: -8px; }
.b5 { left: -6px; top: -8px; }
.b3 { left: 37px; top: -3px; }
.m2 { left: 0; top: 2px; width: 25px; height: 25px; }
.b2 { left: 1px; top: -2px; }
.m4 { left: 0; top: 4px; width: 25px; height: 25px; }
.b4 { left: -23px; top: 0; }
.m6 { left: 1px; top: 0; width: 183px; height: 20px; z-index: 1; }
.b6 { left: 2px; top: -1px; }
.m7 { left: 1px; top: 0; right: -1px; height: 29px; }
.b7 { left: -7px; top: -12px; }
</style>
